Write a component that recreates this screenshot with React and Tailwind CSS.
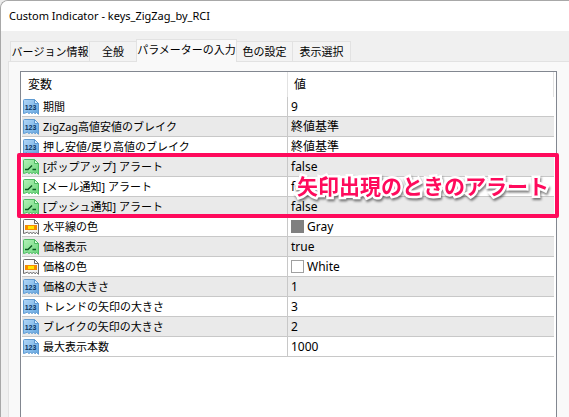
import React, { useState } from 'react';
import { clsx } from 'clsx';

const tabs = [
  { id: 'about', label: 'バージョン情報', width: 'w-20' },
  { id: 'common', label: '全般', width: 'w-12' },
  { id: 'inputs', label: 'パラメーターの入力', width: 'w-[101px]' },
  { id: 'colors', label: '色の設定', width: 'w-[57px]' },
  { id: 'visualization', label: '表示選択', width: 'w-[59px]' },
];

const params = [
  { type: 'number', name: '期間', value: '9' },
  { type: 'number', name: 'ZigZag高値安値のブレイク', value: '終値基準' },
  { type: 'number', name: '押し安値/戻り高値のブレイク', value: '終値基準' },
  { type: 'bool', name: '[ポップアップ] アラート', value: 'false' },
  { type: 'bool', name: '[メール通知] アラート', value: 'false' },
  { type: 'bool', name: '[プッシュ通知] アラート', value: 'false' },
  { type: 'color', name: '水平線の色', value: 'Gray', swatch: 'bg-[#808080] border-[#808080]' },
  { type: 'bool', name: '価格表示', value: 'true' },
  { type: 'color', name: '価格の色', value: 'White', swatch: 'bg-white border-[#a0a0a0]' },
  { type: 'number', name: '価格の大きさ', value: '1' },
  { type: 'number', name: 'トレンドの矢印の大きさ', value: '3' },
  { type: 'number', name: 'ブレイクの矢印の大きさ', value: '2' },
  { type: 'number', name: '最大表示本数', value: '1000' },
];

const palette = {
  number: { from: '#b4d8f8', to: '#62a5df', line: '#5f9bd2', fold: '#d9ecfc' },
  bool: { from: '#b4f2b8', to: '#68d57a', line: '#4dbb62', fold: '#dcfbdd' },
  color: { from: '#ffffff', to: '#ececec', line: '#6b6b6b', fold: '#ffffff' },
};

// Sheet of paper with a folded corner and a torn bottom edge
const TypeIcon = ({ type }) => {
  const c = palette[type];
  return (
    <svg className="w-4 h-4 shrink-0" viewBox="0 0 16 16" aria-hidden="true">
      <defs>
        <linearGradient id={`paper-${type}`} x1="0" y1="0" x2="1" y2="1">
          <stop offset="0" stopColor={c.from} />
          <stop offset="1" stopColor={c.to} />
        </linearGradient>
      </defs>
      <path
        d="M1.5 .5H11.5L15.5 4.5V15.3L13.5 13.5L12 14.8L10.5 13L9 14.8L7.5 13L6 14.8L4.5 13L3 13.8L.5 14.5V1.5Q.5 .5 1.5 .5Z"
        fill={`url(#paper-${type})`}
        stroke={c.line}
      />
      <path d="M11.5 .5V4.5H15.5Z" fill={c.fold} stroke={c.line} />
      {type === 'number' && (
        <text
          x="7.5"
          y="11"
          textAnchor="middle"
          fill="#0c3560"
          className="text-[7px] font-bold font-['Liberation_Sans',sans-serif]"
        >
          123
        </text>
      )}
      {type === 'bool' && (
        <path d="M2 10.5H5L9 6.5M9.5 10.5H13" fill="none" stroke="#0b5a22" strokeWidth="1.4" />
      )}
      {type === 'color' && (
        <>
          <rect x="2" y="6" width="12" height="5" fill="#f58a00" />
          <rect x="5" y="7" width="6" height="3" fill="#ffe500" />
        </>
      )}
    </svg>
  );
};

const ParamRow = ({ param, shaded }) => (
  <tr className={clsx('h-5', shaded && 'bg-[#eaeaea]')}>
    <td className="h-5 p-0 border-b border-r border-[#c8c8c8]">
      <div className="flex items-center gap-1 pl-px text-[11px] leading-4 whitespace-nowrap">
        <TypeIcon type={param.type} />
        <span>{param.name}</span>
      </div>
    </td>
    <td className="h-5 p-0 border-b border-[#c8c8c8]">
      <div className="flex items-center gap-[3px] pl-[3px] leading-4">
        {param.swatch && <span className={clsx('w-[13px] h-[13px] border', param.swatch)} />}
        <span>{param.value}</span>
      </div>
    </td>
  </tr>
);

const App = () => {
  const [activeTab, setActiveTab] = useState('inputs');

  return (
    <div className="min-h-screen bg-[#ececec]">
      <div className="min-h-screen flex flex-col bg-[#f0f0f0] border-t border-l border-[#a8a8a8] rounded-tl-lg overflow-hidden text-xs text-black font-['Noto_Sans','Noto_Sans_CJK_JP',sans-serif]">
        <header className="h-[30px] flex items-center px-2 bg-white">
          <h1 className="text-[11px] leading-4 whitespace-nowrap">Custom Indicator - keys_ZigZag_by_RCI</h1>
        </header>

        <main className="flex-1 flex flex-col pt-2 pl-[7px]">
          <div role="tablist" className="flex items-end pl-0.5">
            {tabs.map((tab) => (
              <button
                key={tab.id}
                type="button"
                role="tab"
                aria-selected={activeTab === tab.id}
                onClick={() => setActiveTab(tab.id)}
                className={clsx(
                  'shrink-0 -mr-px border border-b-0 border-[#e2e2e2] text-[11px] leading-4 whitespace-nowrap flex items-center justify-center',
                  tab.width,
                  activeTab === tab.id ? 'relative -mb-px h-[23px] pb-0.5 bg-[#f9f9f9]' : 'h-5 bg-[#f3f3f3]'
                )}
              >
                {tab.label}
              </button>
            ))}
          </div>

          <section className="flex-1 flex flex-col pt-[9px] pl-[11px] pr-3 bg-[#f9f9f9] border-t border-l border-[#e2e2e2]">
            <div className="relative flex-1 bg-white border border-b-0 border-[#828790] pl-px pr-0.5">
              <table className="w-full table-fixed border-separate border-spacing-0 text-left">
                <thead>
                  <tr>
                    <th className="h-[25px] w-1/2 p-0 pl-1.5 font-normal leading-4 border-r border-[#e2e2e2]">変数</th>
                    <th className="h-[25px] w-1/2 p-0 pl-1.5 font-normal leading-4 border-r border-[#e2e2e2]">値</th>
                  </tr>
                </thead>
                <tbody>
                  {params.map((param, index) => (
                    <ParamRow key={param.name} param={param} shaded={index % 2 === 1} />
                  ))}
                </tbody>
              </table>

              {/* Callout around the three alert rows */}
              <div className="absolute top-[81px] -left-1 -right-[3px] h-[65px] border-4 border-[#ff0a5c] rounded-xs flex items-center justify-end pr-1.5 pointer-events-none">
                <span className="text-[21px] leading-8 font-bold text-[#ff0a5c] whitespace-nowrap [-webkit-text-stroke:5px_white] [paint-order:stroke_fill] drop-shadow-[1px_2px_1px_rgba(0,0,0,0.5)]">
                  矢印出現のときのアラート
                </span>
              </div>
            </div>
          </section>
        </main>
      </div>
    </div>
  );
};

export default App;
